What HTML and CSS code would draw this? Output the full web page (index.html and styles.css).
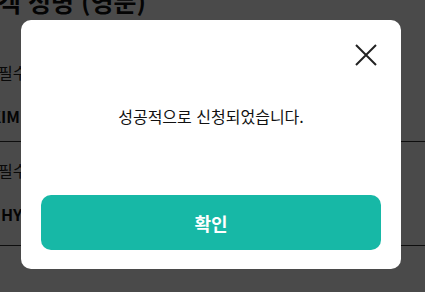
FILE: index.html
```html
<!DOCTYPE html>
<html lang="ko">
<head>
<meta charset="utf-8">
<link rel="stylesheet" href="styles.css">
</head>
<body>
<main class="page">
  <h2 class="title">탑승객 성명 (영문)</h2>
  <section class="field">
    <div class="label">필수</div>
    <div class="value value-first">KIM</div>
  </section>
  <section class="field field-second">
    <div class="label">필수</div>
    <div class="value">HYUN</div>
  </section>
</main>
<div class="overlay">
  <div class="modal">
    <div class="modal-head">
      <button class="close" aria-label="닫기">
        <svg width="22" height="22" viewBox="0 0 22 22"><path d="M1 1L21 21M21 1L1 21" stroke="#222" stroke-width="2" fill="none"/></svg>
      </button>
    </div>
    <p class="message">성공적으로 신청되었습니다.</p>
    <button class="confirm">확인</button>
  </div>
</div>
</body>
</html>
```
FILE: styles.css
```css
html, body {
  margin: 0;
  padding: 0;
  width: 425px;
  height: 292px;
  overflow: hidden;
  background: #fff;
  font-family: "Noto Sans CJK KR", "Noto Sans", sans-serif;
}
.page {
  margin-top: -14px;
  color: #111;
}
.title {
  margin: 0 0 0 -48px;
  font-size: 25px;
  font-weight: 700;
  line-height: 31px;
  white-space: nowrap;
}
.field {
  border-bottom: 1px solid #333;
  padding-top: 44px;
  padding-bottom: 14px;
}
.field-second {
  padding-top: 17px;
  padding-bottom: 20px;
}
.label {
  font-size: 16px;
  line-height: 22px;
  color: #222;
  margin-left: -2px;
}
.value {
  font-size: 16px;
  font-weight: 700;
  line-height: 22px;
  padding-top: 22px;
  margin-left: 1px;
}
.value-first {
  margin-left: -10px;
}
.overlay {
  position: fixed;
  inset: 0;
  background: rgba(0, 0, 0, 0.71);
  padding: 20px 24px 23px 21px;
  display: flex;
}
.modal {
  flex: 1;
  background: #fff;
  border-radius: 10px;
  padding: 24px 20px 19px 20px;
  display: flex;
  flex-direction: column;
}
.modal-head {
  display: flex;
  justify-content: flex-end;
  padding-right: 4px;
}
.close {
  border: 0;
  background: none;
  padding: 0;
  width: 22px;
  height: 22px;
  display: block;
}
.close svg { display: block; }
.message {
  margin: 0;
  padding-top: 39px;
  text-align: center;
  font-size: 16px;
  line-height: 22px;
  color: #111;
  flex: 1;
}
.confirm {
  border: 0;
  height: 55px;
  border-radius: 10px;
  background: #17b8a6;
  color: #fff;
  font-family: inherit;
  font-size: 18px;
  font-weight: 700;
}
```
